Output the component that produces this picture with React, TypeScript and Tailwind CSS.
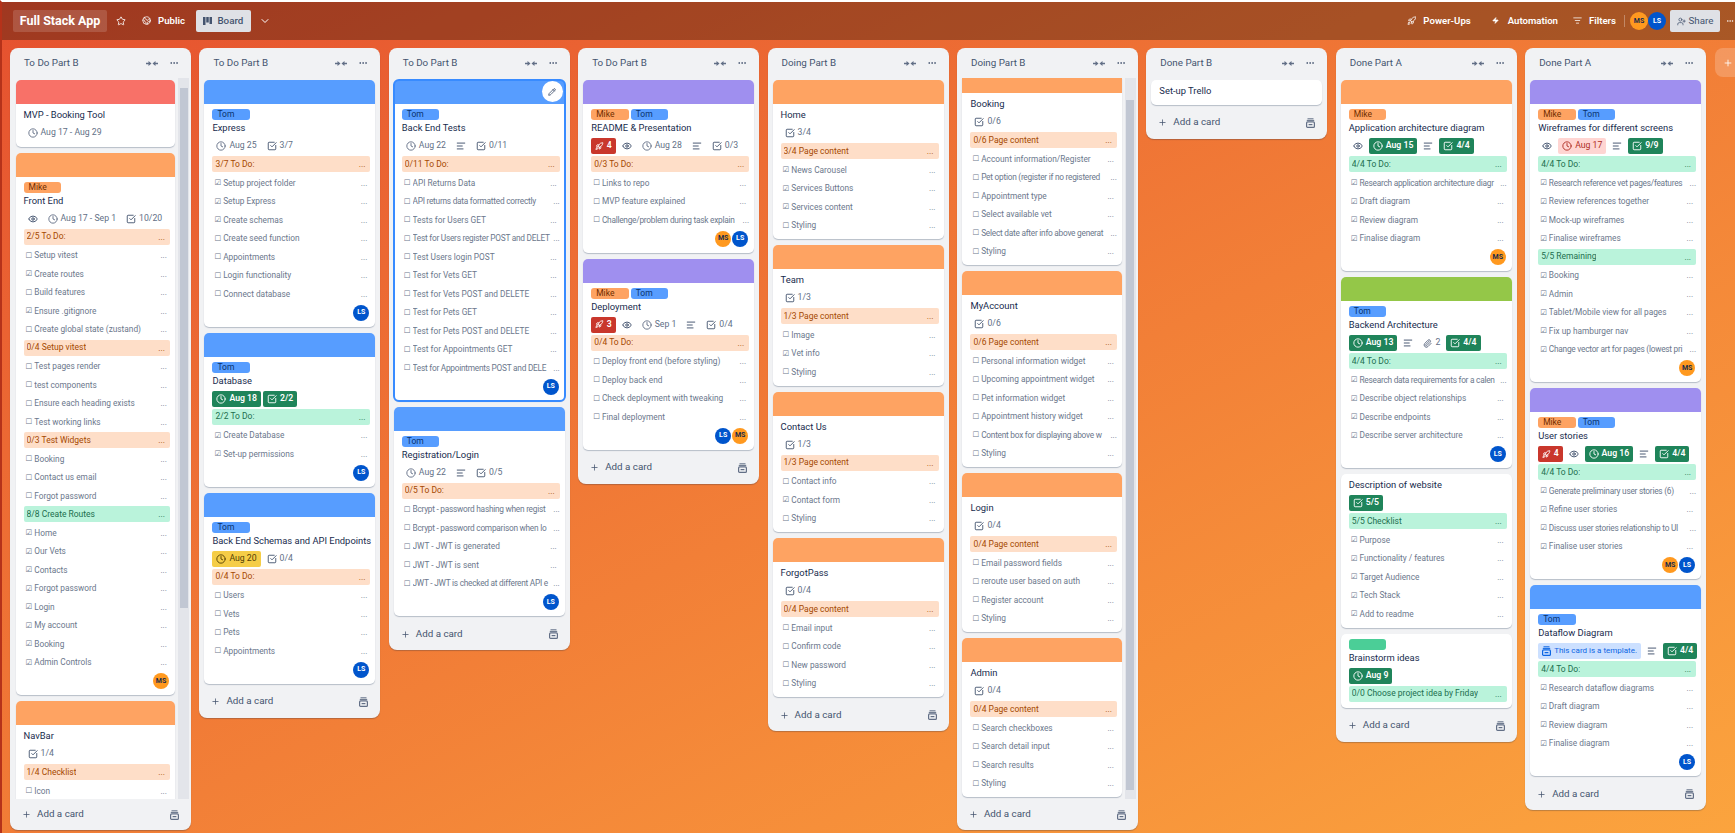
import React from 'react';
import {
  AlignLeft,
  CheckSquare,
  ChevronDown,
  Clock,
  Earth,
  Ellipsis,
  Eye,
  ListFilter,
  Paperclip,
  Pencil,
  Plus,
  Rocket,
  Star,
  UserPlus,
  Zap,
} from 'lucide-react';

type Badge =
  | { k: 'eye' | 'desc' }
  | { k: 'clip'; t: string }
  | { k: 'date' | 'check'; t: string; tone?: 'green' | 'yellow' | 'pink' }
  | { k: 'votes'; t: string }
  | { k: 'template' };

// x = done, o = open, # header (orange), = header (green)
type CardData = {
  cover?: string;
  coverClass?: string;
  labels?: ('Mike' | 'Tom' | 'blank')[];
  title: string;
  badges?: Badge[];
  rows?: string[];
  avatars?: ('MS' | 'LS')[];
  selected?: boolean;
};

type ColumnData = {
  name: string;
  cards: CardData[];
  scroll?: string;
  flush?: boolean;
};

const ORANGE = 'bg-[#fea362]';
const BLUE = 'bg-[#579dff]';
const PURPLE = 'bg-[#9f8fef]';

const columns: ColumnData[] = [
  {
    name: 'To Do Part B',
    scroll: 'mt-[10px] h-[520px]',
    cards: [
      {
        cover: 'bg-[#f87168]',
        title: 'MVP - Booking Tool',
        badges: [{ k: 'date', t: 'Aug 17 - Aug 29' }],
      },
      {
        cover: ORANGE,
        labels: ['Mike'],
        title: 'Front End',
        badges: [{ k: 'eye' }, { k: 'date', t: 'Aug 17 - Sep 1' }, { k: 'check', t: '10/20' }],
        rows: [
          '#2/5 To Do:',
          'oSetup vitest',
          'xCreate routes',
          'oBuild features',
          'xEnsure .gitignore',
          'oCreate global state (zustand)',
          '#0/4 Setup vitest',
          'oTest pages render',
          'otest components',
          'oEnsure each heading exists',
          'oTest working links',
          '#0/3 Test Widgets',
          'oBooking',
          'oContact us email',
          'oForgot password',
          '=8/8 Create Routes',
          'xHome',
          'xOur Vets',
          'xContacts',
          'xForgot password',
          'xLogin',
          'xMy account',
          'xBooking',
          'xAdmin Controls',
        ],
        avatars: ['MS'],
      },
      {
        cover: ORANGE,
        title: 'NavBar',
        badges: [{ k: 'check', t: '1/4' }],
        rows: ['#1/4 Checklist', 'oIcon'],
      },
    ],
  },
  {
    name: 'To Do Part B',
    cards: [
      {
        cover: BLUE,
        labels: ['Tom'],
        title: 'Express',
        badges: [{ k: 'date', t: 'Aug 25' }, { k: 'check', t: '3/7' }],
        rows: [
          '#3/7 To Do:',
          'xSetup project folder',
          'xSetup Express',
          'xCreate schemas',
          'oCreate seed function',
          'oAppointments',
          'oLogin functionality',
          'oConnect database',
        ],
        avatars: ['LS'],
      },
      {
        cover: BLUE,
        labels: ['Tom'],
        title: 'Database',
        badges: [
          { k: 'date', t: 'Aug 18', tone: 'green' },
          { k: 'check', t: '2/2', tone: 'green' },
        ],
        rows: ['=2/2 To Do:', 'xCreate Database', 'xSet-up permissions'],
        avatars: ['LS'],
      },
      {
        cover: BLUE,
        labels: ['Tom'],
        title: 'Back End Schemas and API Endpoints',
        badges: [{ k: 'date', t: 'Aug 20', tone: 'yellow' }, { k: 'check', t: '0/4' }],
        rows: ['#0/4 To Do:', 'oUsers', 'oVets', 'oPets', 'oAppointments'],
        avatars: ['LS'],
      },
    ],
  },
  {
    name: 'To Do Part B',
    cards: [
      {
        cover: BLUE,
        labels: ['Tom'],
        title: 'Back End Tests',
        selected: true,
        badges: [{ k: 'date', t: 'Aug 22' }, { k: 'desc' }, { k: 'check', t: '0/11' }],
        rows: [
          '#0/11 To Do:',
          'oAPI Returns Data',
          'oAPI returns data formatted correctly',
          'oTests for Users GET',
          'oTest for Users register POST and DELET',
          'oTest Users login POST',
          'oTest for Vets GET',
          'oTest for Vets POST and DELETE',
          'oTest for Pets GET',
          'oTest for Pets POST and DELETE',
          'oTest for Appointments GET',
          'oTest for Appointments POST and DELE',
        ],
        avatars: ['LS'],
      },
      {
        cover: BLUE,
        labels: ['Tom'],
        title: 'Registration/Login',
        badges: [{ k: 'date', t: 'Aug 22' }, { k: 'desc' }, { k: 'check', t: '0/5' }],
        rows: [
          '#0/5 To Do:',
          'oBcrypt - password hashing when regist',
          'oBcrypt - password comparison when lo',
          'oJWT - JWT is generated',
          'oJWT - JWT is sent',
          'oJWT - JWT is checked at different API e',
        ],
        avatars: ['LS'],
      },
    ],
  },
  {
    name: 'To Do Part B',
    cards: [
      {
        cover: PURPLE,
        labels: ['Mike', 'Tom'],
        title: 'README & Presentation',
        badges: [
          { k: 'votes', t: '4' },
          { k: 'eye' },
          { k: 'date', t: 'Aug 28' },
          { k: 'desc' },
          { k: 'check', t: '0/3' },
        ],
        rows: [
          '#0/3 To Do:',
          'oLinks to repo',
          'oMVP feature explained',
          'oChallenge/problem during task explain',
        ],
        avatars: ['MS', 'LS'],
      },
      {
        cover: PURPLE,
        labels: ['Mike', 'Tom'],
        title: 'Deployment',
        badges: [
          { k: 'votes', t: '3' },
          { k: 'eye' },
          { k: 'date', t: 'Sep 1' },
          { k: 'desc' },
          { k: 'check', t: '0/4' },
        ],
        rows: [
          '#0/4 To Do:',
          'oDeploy front end (before styling)',
          'oDeploy back end',
          'oCheck deployment with tweaking',
          'oFinal deployment',
        ],
        avatars: ['LS', 'MS'],
      },
    ],
  },
  {
    name: 'Doing Part B',
    cards: [
      {
        cover: ORANGE,
        title: 'Home',
        badges: [{ k: 'check', t: '3/4' }],
        rows: [
          '#3/4 Page content',
          'xNews Carousel',
          'xServices Buttons',
          'xServices content',
          'oStyling',
        ],
      },
      {
        cover: ORANGE,
        title: 'Team',
        badges: [{ k: 'check', t: '1/3' }],
        rows: ['#1/3 Page content', 'oImage', 'xVet info', 'oStyling'],
      },
      {
        cover: ORANGE,
        title: 'Contact Us',
        badges: [{ k: 'check', t: '1/3' }],
        rows: ['#1/3 Page content', 'oContact info', 'xContact form', 'oStyling'],
      },
      {
        cover: ORANGE,
        title: 'ForgotPass',
        badges: [{ k: 'check', t: '0/4' }],
        rows: ['#0/4 Page content', 'oEmail input', 'oConfirm code', 'oNew password', 'oStyling'],
      },
    ],
  },
  {
    name: 'Doing Part B',
    scroll: 'mt-[22px] h-[690px]',
    flush: true,
    cards: [
      {
        cover: ORANGE,
        coverClass: 'h-[15px]',
        title: 'Booking',
        badges: [{ k: 'check', t: '0/6' }],
        rows: [
          '#0/6 Page content',
          'oAccount information/Register',
          'oPet option (register if no registered',
          'oAppointment type',
          'oSelect available vet',
          'oSelect date after info above generat',
          'oStyling',
        ],
      },
      {
        cover: ORANGE,
        title: 'MyAccount',
        badges: [{ k: 'check', t: '0/6' }],
        rows: [
          '#0/6 Page content',
          'oPersonal information widget',
          'oUpcoming appointment widget',
          'oPet information widget',
          'oAppointment history widget',
          'oContent box for displaying above w',
          'oStyling',
        ],
      },
      {
        cover: ORANGE,
        title: 'Login',
        badges: [{ k: 'check', t: '0/4' }],
        rows: [
          '#0/4 Page content',
          'oEmail password fields',
          'oreroute user based on auth',
          'oRegister account',
          'oStyling',
        ],
      },
      {
        cover: ORANGE,
        title: 'Admin',
        badges: [{ k: 'check', t: '0/4' }],
        rows: [
          '#0/4 Page content',
          'oSearch checkboxes',
          'oSearch detail input',
          'oSearch results',
          'oStyling',
        ],
      },
    ],
  },
  {
    name: 'Done Part B',
    cards: [{ title: 'Set-up Trello' }],
  },
  {
    name: 'Done Part A',
    cards: [
      {
        cover: ORANGE,
        labels: ['Mike'],
        title: 'Application architecture diagram',
        badges: [
          { k: 'eye' },
          { k: 'date', t: 'Aug 15', tone: 'green' },
          { k: 'desc' },
          { k: 'check', t: '4/4', tone: 'green' },
        ],
        rows: [
          '=4/4 To Do:',
          'xResearch application architecture diagr',
          'xDraft diagram',
          'xReview diagram',
          'xFinalise diagram',
        ],
        avatars: ['MS'],
      },
      {
        cover: 'bg-[#94c748]',
        labels: ['Tom'],
        title: 'Backend Architecture',
        badges: [
          { k: 'date', t: 'Aug 13', tone: 'green' },
          { k: 'desc' },
          { k: 'clip', t: '2' },
          { k: 'check', t: '4/4', tone: 'green' },
        ],
        rows: [
          '=4/4 To Do:',
          'xResearch data requirements for a calen',
          'xDescribe object relationships',
          'xDescribe endpoints',
          'xDescribe server architecture',
        ],
        avatars: ['LS'],
      },
      {
        title: 'Description of website',
        badges: [{ k: 'check', t: '5/5', tone: 'green' }],
        rows: [
          '=5/5 Checklist',
          'xPurpose',
          'xFunctionality / features',
          'xTarget Audience',
          'xTech Stack',
          'xAdd to readme',
        ],
      },
      {
        labels: ['blank'],
        title: 'Brainstorm ideas',
        badges: [{ k: 'date', t: 'Aug 9', tone: 'green' }],
        rows: ['=0/0 Choose project idea by Friday'],
      },
    ],
  },
  {
    name: 'Done Part A',
    cards: [
      {
        cover: PURPLE,
        labels: ['Mike', 'Tom'],
        title: 'Wireframes for different screens',
        badges: [
          { k: 'eye' },
          { k: 'date', t: 'Aug 17', tone: 'pink' },
          { k: 'desc' },
          { k: 'check', t: '9/9', tone: 'green' },
        ],
        rows: [
          '=4/4 To Do:',
          'xResearch reference vet pages/features',
          'xReview references together',
          'xMock-up wireframes',
          'xFinalise wireframes',
          '=5/5 Remaining',
          'xBooking',
          'xAdmin',
          'xTablet/Mobile view for all pages',
          'xFix up hamburger nav',
          'xChange vector art for pages (lowest pri',
        ],
        avatars: ['MS'],
      },
      {
        cover: PURPLE,
        labels: ['Mike', 'Tom'],
        title: 'User stories',
        badges: [
          { k: 'votes', t: '4' },
          { k: 'eye' },
          { k: 'date', t: 'Aug 16', tone: 'green' },
          { k: 'desc' },
          { k: 'check', t: '4/4', tone: 'green' },
        ],
        rows: [
          '=4/4 To Do:',
          'xGenerate preliminary user stories (6)',
          'xRefine user stories',
          'xDiscuss user stories relationship to UI',
          'xFinalise user stories',
        ],
        avatars: ['MS', 'LS'],
      },
      {
        cover: BLUE,
        labels: ['Tom'],
        title: 'Dataflow Diagram',
        badges: [{ k: 'template' }, { k: 'desc' }, { k: 'check', t: '4/4', tone: 'green' }],
        rows: [
          '=4/4 To Do:',
          'xResearch dataflow diagrams',
          'xDraft diagram',
          'xReview diagram',
          'xFinalise diagram',
        ],
        avatars: ['LS'],
      },
    ],
  },
];

const CollapseIcon = () => (
  <svg width="12" height="7" viewBox="0 0 12 7" className="fill-[#626f86]">
    <path d="M0 2.7h2.5V1l3 2.5-3 2.5V4.3H0zM12 2.7H9.5V1l-3 2.5 3 2.5V4.3H12z" />
  </svg>
);

const TemplateIcon = ({ className }: { className: string }) => (
  <svg width="9" height="10" viewBox="0 0 9 10" fill="none" stroke="currentColor" className={className}>
    <path d="M1.5.8h6M.8 2.4h7.4" strokeWidth="1" />
    <rect x="0.6" y="3.9" width="7.8" height="5.5" rx="1" strokeWidth="1.2" />
    <path d="M2.6 6.6h3.8" strokeWidth="1.2" />
  </svg>
);

const BoardIcon = () => (
  <svg width="9" height="8" viewBox="0 0 9 8" className="fill-[#44546f]">
    <path d="M0 0h2.5v8H0zM3.25 0h2.5v5.5h-2.5zM6.5 0H9v7H6.5z" />
  </svg>
);

const Avatar = ({ who, size = 'h-4 w-4' }: { who: 'MS' | 'LS'; size?: string }) => (
  <div
    className={`flex items-center justify-center rounded-full text-[7px] font-bold ${size} ${
      who === 'MS' ? 'bg-[#ff991f] text-[#172b4d]' : 'bg-[#0055cc] text-white'
    }`}
  >
    {who}
  </div>
);

const CardBadge = ({ b }: { b: Badge }) => {
  const box = 'mr-[2px] flex h-4 items-center gap-[3px] whitespace-nowrap rounded-[2px] px-1';
  if (b.k === 'eye') {
    return (
      <span className={`${box} text-[#44546f]`}>
        <Eye size={10} strokeWidth={2.3} />
      </span>
    );
  }
  if (b.k === 'desc') {
    return (
      <span className={`${box} text-[#44546f]`}>
        <AlignLeft size={10} strokeWidth={2.3} />
      </span>
    );
  }
  if (b.k === 'clip') {
    return (
      <span className={`${box} text-[8.7px] text-[#626f86]`}>
        <Paperclip size={9} strokeWidth={2.5} />
        {b.t}
      </span>
    );
  }
  if (b.k === 'votes') {
    return (
      <span className={`${box} bg-[#c9372c] text-[8.7px] font-semibold text-white`}>
        <Rocket size={8.5} strokeWidth={2.5} />
        {b.t}
      </span>
    );
  }
  if (b.k === 'template') {
    return (
      <span className={`${box} bg-[#cce0ff] text-[8px] text-[#0c66e4]`}>
        <TemplateIcon className="text-[#0c66e4]" />
        This card is a template.
      </span>
    );
  }
  const Icon = b.k === 'date' ? Clock : CheckSquare;
  const tone =
    b.tone === 'green'
      ? 'bg-[#1f845a] font-semibold text-white'
      : b.tone === 'yellow'
        ? 'bg-[#f5cd47] text-[#533f04]'
        : b.tone === 'pink'
          ? 'bg-[#ffd5d2] text-[#ae2e24]'
          : 'text-[#626f86]';
  return (
    <span className={`${box} text-[8.7px] ${tone}`}>
      <Icon size={10} strokeWidth={2.2} className={b.tone || b.k === 'date' ? '' : 'text-[#44546f]'} />
      {b.t}
    </span>
  );
};

const Row = ({ row }: { row: string }) => {
  const kind = row[0];
  const text = row.slice(1);
  if (kind === '#' || kind === '=') {
    return (
      <div className="flex h-[18.5px] items-center">
        <div
          className={`flex h-4 w-full items-center justify-between rounded-[2px] px-[3px] text-[8.5px] ${
            kind === '#' ? 'bg-[#fedec8] text-[#a54800]' : 'bg-[#baf3db] text-[#216e4e]'
          }`}
        >
          <span className="truncate">{text}</span>
          <span className="mr-[2px] leading-none">...</span>
        </div>
      </div>
    );
  }
  const long = text.length > 33;
  return (
    <div
      className={`flex h-[18.5px] items-center pl-[2px] text-[8.3px] text-[#6b778c] ${long ? '' : 'pr-[3px]'}`}
    >
      <span className="mr-[2px] shrink-0 font-['DejaVu_Sans'] text-[7.5px]">
        {kind === 'x' ? '☑' : '☐'}
      </span>
      <span
        className={`min-w-0 flex-1 overflow-hidden whitespace-nowrap ${long ? 'tracking-[-0.25px]' : ''}`}
      >
        {text}
      </span>
      <span className="ml-[2px] shrink-0 leading-none">...</span>
    </div>
  );
};

const Card = ({ card }: { card: CardData }) => (
  <div
    className={`relative mb-[6px] overflow-hidden rounded-[5px] bg-white shadow-[0_1px_1px_#091e4240] ${
      card.selected ? 'outline-2 -outline-offset-1 outline-[#388bff]' : ''
    } ${card.coverClass ? 'rounded-t-none' : ''}`}
  >
    {card.cover && <div className={`${card.coverClass ?? 'h-6'} ${card.cover}`} />}
    {card.selected && (
      <div className="absolute right-[2px] top-[1px] flex h-[21px] w-[21px] items-center justify-center rounded-full bg-white text-[#172b4d]">
        <Pencil size={8} />
      </div>
    )}
    <div className={`pl-2 pr-[5px] pt-[3px] ${card.avatars ? 'pb-[6px]' : 'pb-[4.5px]'}`}>
      {card.labels && (
        <div className="mt-[2px] flex gap-[2px]">
          {card.labels.map((l) => (
            <span
              key={l}
              className={`flex h-[11px] w-[37.5px] items-center rounded-[3px] pl-[5px] text-[8.5px] ${
                l === 'Mike'
                  ? 'bg-[#fea362] text-[#702e00]'
                  : l === 'Tom'
                    ? 'bg-[#579dff] text-[#09326c]'
                    : 'bg-[#4bce97]'
              }`}
            >
              {l === 'blank' ? '' : l}
            </span>
          ))}
        </div>
      )}
      <div className="flex h-[17px] items-center whitespace-nowrap text-[9.4px] text-[#172b4d]">
        {card.title}
      </div>
      {card.badges && (
        <div className="mb-px mt-px flex">
          {card.badges.map((b, i) => (
            <CardBadge key={i} b={b} />
          ))}
        </div>
      )}
      {card.rows?.map((r, i) => <Row key={i} row={r} />)}
      {card.avatars && (
        <div className="mt-[1.5px] flex justify-end gap-[1px] pr-[1px]">
          {card.avatars.map((a) => (
            <Avatar key={a} who={a} />
          ))}
        </div>
      )}
    </div>
  </div>
);

const Column = ({ col }: { col: ColumnData }) => (
  <div className="w-[181px] shrink-0 rounded-[8px] bg-[#f1f2f4] shadow-[0_1px_1px_#091e4240]">
    <div className="flex h-[30px] items-center pl-[14px] pr-3">
      <span className="flex-1 text-[9.8px] text-[#44546f]">{col.name}</span>
      <CollapseIcon />
      <Ellipsis size={10} className="ml-[11px] text-[#44546f]" />
    </div>
    {col.scroll ? (
      <div className="flex h-[721px] overflow-hidden">
        <div className={`ml-[5.5px] w-[159.5px] ${col.flush ? '' : 'pt-[2px]'}`}>
          {col.cards.map((c, i) => (
            <Card key={i} card={c} />
          ))}
        </div>
        <div className="ml-[3px] w-[11px] bg-[#e3e5ea]">
          <div className={`mx-[1.5px] bg-[#c1c7d3] ${col.scroll}`} />
        </div>
      </div>
    ) : (
      <div className="px-[5px] pt-[2px]">
        {col.cards.map((c, i) => (
          <Card key={i} card={c} />
        ))}
      </div>
    )}
    <div
      className={`flex items-center pl-3 pr-3 text-[#44546f] ${col.scroll ? 'h-[31px]' : '-mt-[6px] h-[34px] pt-[2px]'}`}
    >
      <Plus size={9} className="mr-[6px]" />
      <span className="flex-1 text-[9.8px]">Add a card</span>
      <TemplateIcon className="text-[#626f86]" />
    </div>
  </div>
);

const HeaderItem = ({ icon, label, className }: { icon: React.ReactNode; label: string; className: string }) => (
  <div className={`flex items-center text-[9.6px] font-semibold text-white ${className}`}>
    {icon}
    {label}
  </div>
);

export default function App() {
  return (
    <div className="flex h-screen w-screen flex-col overflow-hidden border-l-2 border-t-2 border-l-[#b5321a] border-t-white bg-linear-to-br from-[#e5502f] to-[#fba43e] font-['Roboto','Noto_Sans',sans-serif]">
      <header className="flex h-[38px] shrink-0 items-center bg-black/30 pl-[11px] pr-px">
        <div className="flex h-[22px] w-[94px] items-center justify-center rounded-[2px] bg-white/15 text-[12.5px] font-bold text-white">
          Full Stack App
        </div>
        <Star size={10} className="ml-[9px] text-white" />
        <HeaderItem
          icon={<Earth size={9} className="mr-[7px]" />}
          label="Public"
          className="ml-[16px]"
        />
        <div className="ml-[11px] flex h-[22px] w-[55px] items-center justify-center gap-[5px] rounded-[2px] bg-[#dfe1e6] text-[9.8px] font-medium text-[#44546f]">
          <BoardIcon />
          Board
        </div>
        <ChevronDown size={12} className="ml-[8px] text-white" />
        <div className="flex-1" />
        <HeaderItem icon={<Rocket size={9.5} className="mr-[7px]" />} label="Power-Ups" className="" />
        <HeaderItem
          icon={<Zap size={7} fill="white" className="mr-[9px]" />}
          label="Automation"
          className="ml-[21px]"
        />
        <HeaderItem
          icon={<ListFilter size={9} className="mr-[7px]" />}
          label="Filters"
          className="ml-[15px]"
        />
        <div className="ml-[8px] h-3 w-px bg-white/30" />
        <div className="ml-[5px] flex">
          <Avatar who="MS" size="h-[18px] w-[18px]" />
          <Avatar who="LS" size="h-[18px] w-[18px]" />
        </div>
        <div className="ml-[4px] flex h-[22px] w-[50px] items-center justify-center gap-[3px] rounded-[2px] bg-[#dfe1e6] text-[9.8px] text-[#44546f]">
          <UserPlus size={9} />
          Share
        </div>
        <Ellipsis size={8} className="ml-[6px] text-white" />
      </header>
      <main className="flex items-start gap-[8.4px] pl-2 pt-2">
        {columns.map((c, i) => (
          <Column key={i} col={c} />
        ))}
        <div className="flex h-[29px] w-[181px] shrink-0 items-center rounded-[8px] bg-white/20 pl-[8px] text-white">
          <Plus size={10} />
        </div>
      </main>
    </div>
  );
}
